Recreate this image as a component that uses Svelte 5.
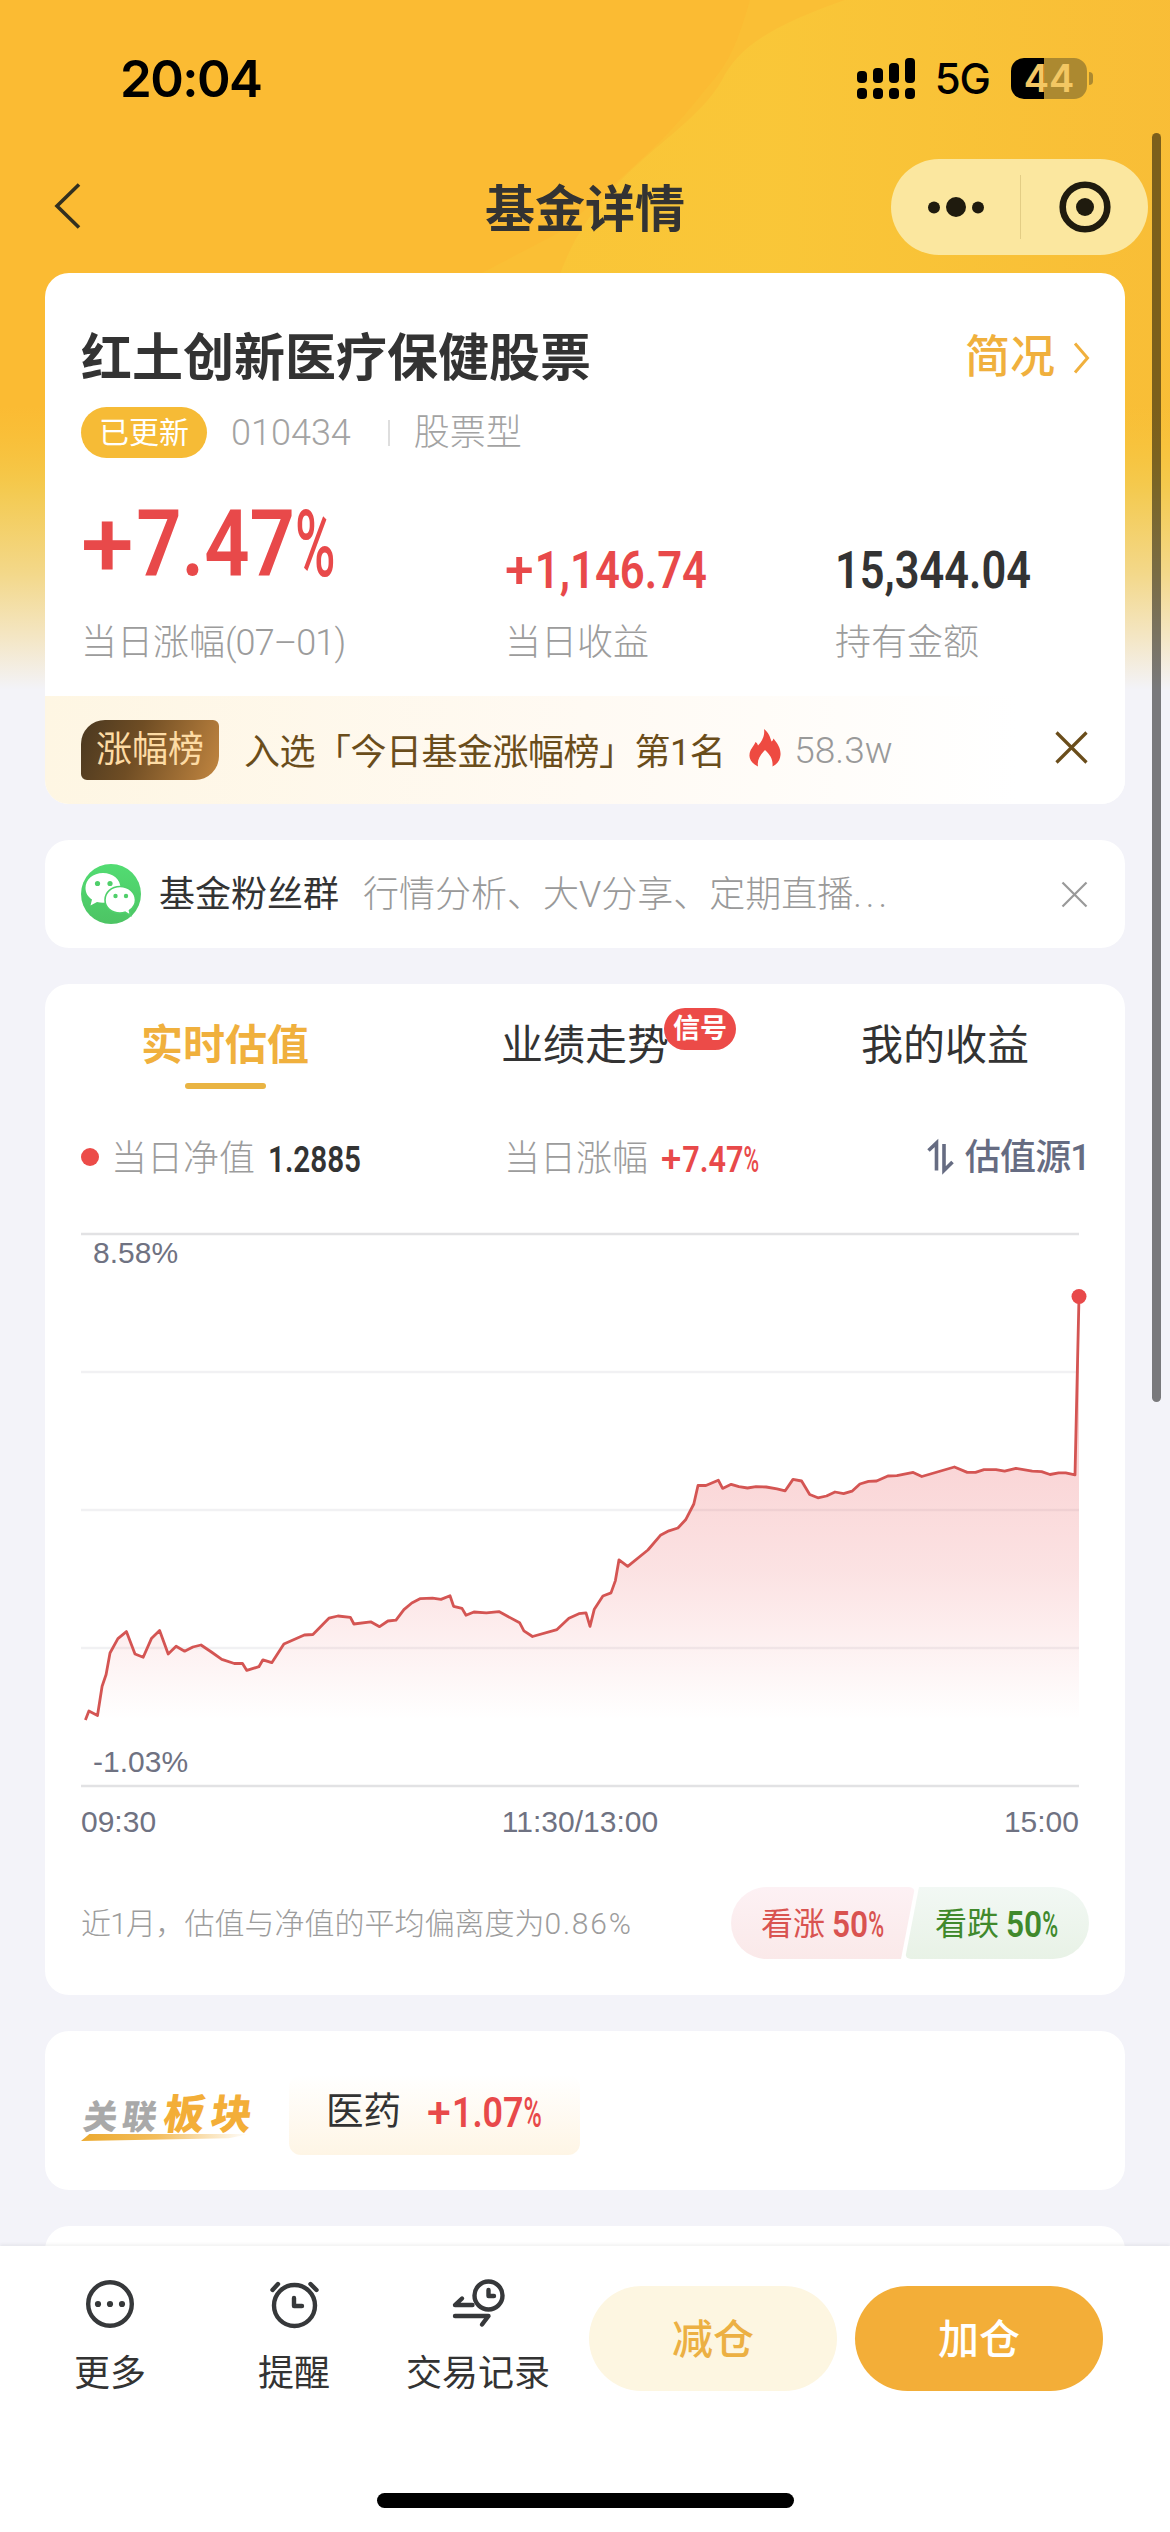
<script lang="ts">
  type Point = [number, number];

  const chart = { width: 998, height: 552, baseline: 486 };
  const gridLines = [0, 138, 276, 414, 552];

  // intraday estimate, in chart pixels
  const points: Point[] = [
    [4.4, 486], [7.9, 477], [16.5, 481.5], [21.1, 452.3], [25.1, 440.5], [29, 419], [36.9, 404.6], [45.4, 397.6],
    [54, 420], [62.2, 423.3], [70.4, 404.6], [78.6, 396.4], [87.2, 420], [95.1, 412.3], [103.6, 417.2], [111.9, 413],
    [120, 411], [130.4, 418], [140.8, 425.4], [153.3, 429.5], [161.5, 429.5], [165.8, 436.4], [177.9, 432.7],
    [181.9, 425.8], [190.8, 428.7], [202.9, 410], [223.3, 401], [231.9, 400.5], [247.9, 384.2], [256.9, 382],
    [269.4, 383.3], [272.9, 390], [289.7, 387.8], [298.6, 392.7], [306.9, 387], [315, 386.2], [322.9, 375.6],
    [330.8, 369], [339.4, 364.6], [351.5, 364.2], [360, 365.4], [369, 361.7], [372.6, 372.3], [381, 374.4],
    [385, 381.3], [392.9, 378], [405.4, 378.9], [417.9, 377.6], [438.6, 388.7], [442.9, 396.8], [451.5, 402.5],
    [476, 395.6], [487.9, 384.2], [497.9, 379.7], [505, 378.9], [509, 392.3], [513.3, 375.2], [521.9, 362],
    [530, 358.9], [534.4, 346.6], [538, 325.8], [546.7, 332.3], [566.9, 316], [579.4, 301.3], [587.9, 296.8],
    [596.9, 294], [604.6, 285.8], [612.8, 270], [617, 251.5], [624.9, 251.5], [637.3, 246.2], [641.6, 254.4],
    [650.2, 250.3], [657.9, 252.7], [666.5, 254], [675, 252.7], [685.2, 253], [696, 254.8], [704.2, 256.8],
    [712, 245.4], [720.6, 247], [728.7, 260.5], [736.9, 263.8], [745.5, 262], [754, 258], [762.6, 259.7],
    [771, 257.2], [778.9, 250], [787.5, 247.4], [795.6, 247], [806.9, 242], [815.9, 241.7], [832.2, 238.4],
    [840.8, 242.5], [873.4, 233], [886.3, 238.4], [894.5, 238.4], [903, 235.6], [915, 235.6], [923.6, 237.2],
    [934.9, 234.4], [951.2, 237.2], [960.6, 237.6], [969, 240.5], [977.7, 238.9], [984.7, 238.9], [994, 240.9],
    [998, 62.5],
  ];

  let activeTab = $state(0);
  const tabs = [
    { label: "实时估值" },
    { label: "业绩走势", badge: "信号" },
    { label: "我的收益" },
  ];

  let last = $derived(points[points.length - 1]);
  let linePath = $derived(buildPath(points));
  let areaPath = $derived(`${linePath} L${chart.width} ${chart.baseline} L${points[0][0]} ${chart.baseline} Z`);

  function buildPath(pts: Point[]) {
    return pts.map(([x, y], i) => `${i === 0 ? "M" : "L"}${x} ${y}`).join(" ");
  }

  const advance: Record<string, number> = { "+": 0.68, "%": 0.53, ".": 0.25, ",": 0.25 };

  function measure(text: string) {
    return [...text].reduce((sum, c) => sum + (advance[c] ?? 0.57), 0);
  }

  // signs and the percent mark are set lighter than the digits
  function splitSigns(text: string, width: number) {
    const unit = width / measure(text);
    let x = 0;
    return text
      .split(/([+%])/)
      .filter(Boolean)
      .map((part) => {
        const w = measure(part) * unit;
        const sign = part === "+" || part === "%";
        const run = { part, x, w: w - (sign ? unit * 0.03 : 0), sign };
        x += w;
        return run;
      });
  }
</script>

<!-- condensed figures: cap height and run width are fixed -->
{#snippet figure(text: string, width: number, cap: number)}
  <svg class="figure" {width} height={cap} viewBox="0 0 {width} {cap}">
    {#each splitSigns(text, width) as run}
      <text class:sign={run.sign} x={run.x} y={cap} font-size={cap / 0.711} textLength={run.w} lengthAdjust="spacingAndGlyphs">{run.part}</text>
    {/each}
  </svg>
{/snippet}

{#snippet cross(size: number, stroke: number)}
  <svg class="cross" width={size} height={size} viewBox="0 0 {size} {size}">
    <path d="M1.5 1.5 L{size - 1.5} {size - 1.5} M{size - 1.5} 1.5 L1.5 {size - 1.5}" stroke-width={stroke} />
  </svg>
{/snippet}

<div class="screen">
  <svg class="backdrop" width="1170" height="700" viewBox="0 0 1170 700">
    <defs>
      <linearGradient id="glow" x1="0" x2="1" y1="0" y2="0">
        <stop offset="0" stop-color="#f9c738" />
        <stop offset="0.35" stop-color="#f9c939" />
        <stop offset="1" stop-color="#f8bd37" />
      </linearGradient>
      <linearGradient id="fade" x1="0" x2="0" y1="0" y2="1">
        <stop offset="0.58" stop-color="#f6c53c" stop-opacity="0" />
        <stop offset="0.7" stop-color="#f4ca50" />
        <stop offset="0.82" stop-color="#f3d88a" />
        <stop offset="0.91" stop-color="#f4e6c4" />
        <stop offset="0.985" stop-color="#f3f3f8" />
      </linearGradient>
    </defs>
    <rect width="1170" height="700" fill="#fbbb33" />
    <path d="M750 0 C738 40 732 60 705 90 C665 140 655 148 560 232 L430 300 L1170 500 L1170 0 Z" fill="#fabf35" />
    <path d="M845 0 C770 26 738 48 722 80 C690 138 595 170 558 280 L558 440 L1170 440 L1170 0 Z" fill="url(#glow)" opacity="0.75" />
    <rect width="1170" height="700" fill="url(#fade)" />
  </svg>

  <header>
    <div class="status">
      <span class="time">20:04</span>
      <div class="indicators">
        <svg width="58" height="42" viewBox="0 0 58 42">
          <rect x="0" y="13" width="10" height="12" rx="4" />
          <rect x="16" y="10" width="10" height="15" rx="4" />
          <rect x="32" y="5" width="10" height="20" rx="4" />
          <rect x="48" y="0" width="10" height="25" rx="4" />
          <rect x="0" y="30" width="10" height="11" rx="4" />
          <rect x="16" y="30" width="10" height="11" rx="4" />
          <rect x="32" y="30" width="10" height="11" rx="4" />
          <rect x="48" y="30" width="10" height="11" rx="4" />
        </svg>
        <span class="network">5G</span>
        <div class="battery">44</div>
        <i class="battery-tip"></i>
      </div>
    </div>

    <div class="nav">
      <svg class="back" width="27" height="46" viewBox="0 0 27 46">
        <path d="M25 1.5 L3 23 L25 44.5" />
      </svg>
      <h1>基金详情</h1>
      <div class="capsule">
        <svg width="56" height="20" viewBox="0 0 56 20">
          <circle cx="6" cy="10.5" r="6" />
          <circle cx="28" cy="10" r="10" />
          <circle cx="50" cy="10.5" r="6" />
        </svg>
        <i></i>
        <svg width="52" height="52" viewBox="0 0 52 52">
          <circle cx="26" cy="26" r="22.3" fill="none" stroke="#1f1b0e" stroke-width="6.6" />
          <circle cx="26" cy="26" r="9" />
        </svg>
      </div>
    </div>
  </header>

  <main>
    <section class="card fund">
      <div class="title-row">
        <h2>红土创新医疗保健股票</h2>
        <a class="more" href="#brief">
          简况
          <svg width="17" height="32" viewBox="0 0 17 32"><path d="M2 1.5 L14.5 16 L2 30.5" /></svg>
        </a>
      </div>
      <div class="meta">
        <span class="updated">已更新</span>
        <span class="code">010434</span>
        <i></i>
        <span>股票型</span>
      </div>
      <div class="stats">
        <div class="stat primary red">
          {@render figure("+7.47%", 257, 66)}
          <span>当日涨幅<small>(07–01)</small></span>
        </div>
        <div class="stat red">
          {@render figure("+1,146.74", 202, 37)}
          <span>当日收益</span>
        </div>
        <div class="stat">
          {@render figure("15,344.04", 196, 37)}
          <span>持有金额</span>
        </div>
      </div>
      <div class="rank">
        <span class="rank-tag">涨幅榜</span>
        <span class="rank-text">入选「今日基金涨幅榜」第1名</span>
        <svg class="flame" width="32" height="38" viewBox="0 0 32 38">
          <path d="M15 0 C20 4 21 8 22.5 12.5 C23.5 12 24 11 24.5 9.5 C29 15 32 20 31.5 26 C31 32 28 35 23.5 37.5 C24 31 22 26.500 16 21 C10.500 26.500 8 31.500 9 37.500 C4 35 0 31 0.5 26 C0.800 20 4.500 18 6.500 13 C8 14 8.500 15 9 16.500 C13.500 12 16 6 15 0 Z" />
        </svg>
        <span class="heat">58.3w</span>
        {@render cross(33, 3.2)}
      </div>
    </section>

    <section class="card group">
      <svg class="wechat" width="60" height="60" viewBox="0 0 60 60">
        <defs>
          <linearGradient id="wx" x1="0" x2="0" y1="0" y2="1">
            <stop offset="0" stop-color="#52dc72" />
            <stop offset="1" stop-color="#4dc464" />
          </linearGradient>
        </defs>
        <circle cx="30" cy="30" r="30" fill="url(#wx)" />
        <path d="M22 9 C12 9 4.500 15.500 4.500 24 C4.500 29 7 33 11 35.500 L9.500 41.500 L16 38 C18 38.600 20 38.800 22 38.800 C32 38.800 39.500 32 39.500 24 C39.500 15.500 32 9 22 9 Z" fill="#fff" />
        <path d="M39 22.500 C30.500 22.500 24 28.500 24 36 C24 43.500 30.500 49 39 49 C41 49 42.500 48.700 44 48.200 L49.500 51.500 L48.500 46.500 C52 44 54.500 40.500 54.500 36 C54.500 28.500 47.500 22.500 39 22.500 Z" fill="#fff" stroke="#4fd06b" stroke-width="1.6" />
        <g fill="#4fcf6a">
          <circle cx="16.500" cy="19.500" r="2.600" />
          <circle cx="29" cy="19.500" r="2.600" />
          <circle cx="34.500" cy="32" r="2.200" />
          <circle cx="45" cy="32" r="2.200" />
        </g>
      </svg>
      <b>基金粉丝群</b>
      <span>行情分析、大V分享、定期直播<small>...</small></span>
      {@render cross(27, 2.2)}
    </section>

    <section class="card estimate">
      <nav class="tabs">
        {#each tabs as tab, i}
          <button class:active={activeTab === i} onclick={() => (activeTab = i)}>
            {tab.label}
            {#if tab.badge}<em>{tab.badge}</em>{/if}
          </button>
        {/each}
      </nav>

      <div class="legend">
        <div class="legend-item">
          <i class="dot"></i>
          <span>当日净值</span>
          {@render figure("1.2885", 93, 26)}
        </div>
        <div class="legend-item red">
          <span>当日涨幅</span>
          {@render figure("+7.47%", 99, 26)}
        </div>
        <div class="source">
          <svg width="27" height="32" viewBox="0 0 27 32">
            <path d="M1.5 9.500 L9.500 2 V29.500 M17 3 V29.500 L25.500 21" />
          </svg>
          <span>估值源1</span>
        </div>
      </div>

      <div class="plot">
        <svg width={chart.width} height={chart.height} viewBox="0 0 {chart.width} {chart.height}">
          <defs>
            <linearGradient id="area" x1="0" x2="0" y1="0" y2="1">
              <stop offset="0" stop-color="#e94b4f" stop-opacity="0.34" />
              <stop offset="0.65" stop-color="#e94b4f" stop-opacity="0.16" />
              <stop offset="1" stop-color="#e94b4f" stop-opacity="0" />
            </linearGradient>
          </defs>
          {#each gridLines as y, i}
            <line x1="0" x2={chart.width} y1={y} y2={y} class:edge={i === 0 || i === gridLines.length - 1} />
          {/each}
          <path d={areaPath} fill="url(#area)" />
          <path class="line" d={linePath} />
          <circle cx={last[0]} cy={last[1]} r="7.5" />
        </svg>
        <span class="high">8.58%</span>
        <span class="low">-1.03%</span>
      </div>
      <div class="axis">
        <span>09:30</span>
        <span>11:30/13:00</span>
        <span>15:00</span>
      </div>

      <div class="note">
        <p><span>近1月，</span>估值与净值的平均偏离度为<small>0.86%</small></p>
        <div class="votes">
          <div class="vote up"><span>看涨</span> {@render figure("50%", 53, 26)}</div>
          <div class="vote down"><span>看跌</span> {@render figure("50%", 53, 26)}</div>
        </div>
      </div>
    </section>

    <section class="card sector">
      <div class="sector-logo">
        <div><span>关联</span><strong>板块</strong></div>
        <i></i>
      </div>
      <div class="chip red">
        <span>医药</span>
        {@render figure("+1.07%", 116, 30)}
      </div>
    </section>

    <section class="card next"></section>
  </main>

  <footer>
    <div class="action">
      <svg width="50" height="50" viewBox="0 0 50 50">
        <circle cx="25" cy="25" r="21.800" />
        <g class="solid">
          <circle cx="13" cy="25" r="3.100" />
          <circle cx="25" cy="25" r="3.100" />
          <circle cx="37" cy="25" r="3.100" />
        </g>
      </svg>
      更多
    </div>
    <div class="action">
      <svg width="50" height="50" viewBox="0 0 50 50">
        <circle cx="25.500" cy="26.500" r="20.500" />
        <path d="M3.500 11 L9 5 M41.500 5 L47.500 11" />
        <path d="M25 19 V27 H33" />
      </svg>
      提醒
    </div>
    <div class="action">
      <svg width="54" height="50" viewBox="0 0 54 50">
        <circle cx="37.500" cy="16.500" r="14" />
        <path d="M37.500 11 V17 H43" />
        <path d="M21.500 26 H4 L11 19.500 M4 37 H37.500 L31 45.500" />
      </svg>
      交易记录
    </div>
    <button class="reduce">减仓</button>
    <button class="add">加仓</button>
    <i class="home"></i>
  </footer>

  <i class="scrollbar"></i>
</div>

<style>
  :global(body) {
    margin: 0;
    background: #f3f3f9;
  }
  .screen {
    position: relative;
    display: flex;
    flex-direction: column;
    width: 1170px;
    height: 2532px;
    overflow: hidden;
    background: #f3f3f9;
    color: #333;
    font-family: Roboto, "Noto Sans CJK SC", sans-serif;
    font-size: 36px;
    line-height: 1;
    white-space: nowrap;
  }
  .screen > * {
    flex-shrink: 0;
  }
  .screen :global(svg) {
    display: block;
    flex-shrink: 0;
    overflow: visible;
  }
  .backdrop {
    position: absolute;
    top: 0;
    left: 0;
  }
  h1, h2, p, button {
    margin: 0;
    padding: 0;
    border: 0;
    background: none;
    font: inherit;
    color: inherit;
  }
  small {
    font-size: inherit;
  }
  .red { color: #e8494a; }
  .figure {
    fill: currentColor;
    font-family: Roboto, sans-serif;
    font-weight: 600;
  }
  .sign {
    font-weight: 500;
  }
  .cross {
    fill: none;
    stroke: currentColor;
    margin-left: auto;
  }

  header {
    position: relative;
    height: 273px;
  }
  .status {
    display: flex;
    align-items: center;
    justify-content: space-between;
    box-sizing: border-box;
    height: 157px;
    padding: 0 77px 0 120px;
    color: #000;
    font-family: Inter, sans-serif;
  }
  .time {
    font-size: 51px;
    font-weight: 600;
    letter-spacing: -1.6px;
  }
  .indicators {
    display: flex;
    align-items: center;
  }
  .network {
    margin-left: 20px;
    font-size: 42px;
    font-weight: 500;
    letter-spacing: -1px;
  }
  .battery {
    width: 76px;
    height: 41px;
    margin-left: 21px;
    border-radius: 13px;
    background: linear-gradient(90deg, #000 33px, #ac8930 33px);
    color: #f3c763;
    font-size: 38px;
    font-weight: 600;
    line-height: 41px;
    text-align: center;
  }
  .battery-tip {
    width: 4px;
    height: 13px;
    margin-left: 2px;
    border-radius: 0 6px 6px 0;
    background: #ac8930;
  }
  .nav {
    display: grid;
    grid-template-columns: 1fr auto 1fr;
    align-items: center;
    height: 100px;
    padding: 0 22px 0 54px;
  }
  .back {
    margin-bottom: 2px;
    fill: none;
    stroke: #33301f;
    stroke-width: 3.6;
  }
  h1 {
    font-size: 50px;
    font-weight: 700;
    margin-left: -32px;
    margin-top: 6px;
  }
  .capsule {
    display: flex;
    align-items: center;
    justify-self: end;
    box-sizing: border-box;
    width: 257px;
    height: 96px;
    padding-left: 37px;
    border-radius: 48px;
    background: #fbe79f;
    fill: #1f1b0e;
  }
  .capsule i {
    width: 1px;
    height: 64px;
    margin: 0 38px 0 36px;
    background: #e3cd85;
  }

  main {
    position: relative;
    display: flex;
    flex-direction: column;
    gap: 36px;
    height: 1973px;
    padding: 0 45px;
    overflow: hidden;
  }
  .card {
    box-sizing: border-box;
    flex-shrink: 0;
    border-radius: 24px;
    background: #fff;
    overflow: hidden;
  }

  .fund {
    height: 531px;
    padding-top: 53px;
  }
  .title-row {
    display: flex;
    align-items: center;
    justify-content: space-between;
    height: 63px;
    padding: 0 35px 0 36px;
  }
  h2 {
    padding-top: 1px;
    font-size: 51px;
    font-weight: 700;
  }
  .more {
    display: flex;
    align-items: center;
    gap: 18px;
    color: #f0b03d;
    font-size: 45px;
    font-weight: 500;
    text-decoration: none;
  }
  .more svg {
    fill: none;
    stroke: currentColor;
    stroke-width: 3;
  }
  .meta {
    display: flex;
    align-items: center;
    height: 51px;
    margin-top: 18px;
    padding: 0 36px;
    color: #a3a3a3;
    font-weight: 300;
  }
  .updated {
    width: 126px;
    height: 51px;
    margin-right: 24px;
    border-radius: 26px;
    background: #f6bb36;
    color: #fff;
    font-size: 30px;
    font-weight: 400;
    line-height: 51px;
    text-align: center;
  }
  .meta i {
    width: 2px;
    height: 26px;
    margin: 0 24px 0 37px;
    background: #dedede;
  }
  .stats {
    display: grid;
    grid-template-columns: 424px 330px 1fr;
    align-items: end;
    margin-top: 52px;
    padding: 0 36px;
  }
  .stat .figure {
    margin-bottom: 37px;
  }
  .stat.primary .figure {
    margin-bottom: 49px;
  }
  .stat span {
    display: block;
    color: #9c9c9c;
    font-weight: 300;
  }
  .stat small {
    letter-spacing: -0.9px;
  }
  .rank {
    display: flex;
    align-items: center;
    height: 108px;
    margin-top: 35px;
    padding: 0 37px 0 36px;
    background: linear-gradient(90deg, #fef6e3, #fffaf3 50%, #fff 90%);
    color: #6a4d1b;
  }
  .rank-tag {
    width: 138px;
    height: 60px;
    border-radius: 24px 6px 24px 6px;
    background: linear-gradient(110deg, #4a3820, #6f4d24 40%, #c28640);
    color: #fddba4;
    line-height: 60px;
    text-align: center;
  }
  .rank-text {
    margin-left: 25px;
    padding-top: 5px;
    letter-spacing: -0.5px;
  }
  .flame {
    margin: 0 13px 4px 24px;
    fill: #ee4a41;
  }
  .heat {
    color: #999;
    font-weight: 300;
    font-size: 37px;
  }
  .rank .cross {
    margin-bottom: 6px;
  }

  .group {
    display: flex;
    align-items: center;
    height: 108px;
    padding: 0 37px 0 36px;
    color: #999;
  }
  .group b {
    margin: 2px 24px 0 18px;
    color: #333;
    font-weight: 400;
  }
  .group span {
    padding-top: 2px;
    font-weight: 300;
  }
  .group small {
    letter-spacing: 4px;
  }

  .estimate {
    height: 1011px;
  }
  .tabs {
    display: grid;
    grid-template-columns: repeat(3, 1fr);
    height: 105px;
  }
  .tabs button {
    position: relative;
    justify-self: center;
    height: 105px;
    font-size: 42px;
    line-height: 123px;
  }
  .tabs .active {
    color: #f0b03d;
    font-weight: 700;
  }
  .tabs .active::after {
    content: "";
    position: absolute;
    left: 50%;
    bottom: 0;
    width: 81px;
    height: 6px;
    margin-left: -40px;
    border-radius: 3px;
    background: #e9b443;
  }
  .tabs em {
    position: absolute;
    top: 24px;
    left: 163px;
    width: 72px;
    border-radius: 21px;
    background: #ec4b48;
    color: #fff;
    font-size: 27px;
    font-style: normal;
    font-weight: 700;
    line-height: 42px;
    text-align: center;
  }
  .legend {
    display: grid;
    grid-template-columns: 423px 1fr auto;
    align-items: center;
    height: 60px;
    margin-top: 38px;
    padding: 0 35px 0 36px;
  }
  .legend-item {
    display: flex;
    align-items: center;
  }
  .legend-item span {
    margin: 3px 13px 0 0;
    color: #9c9c9c;
    font-weight: 300;
  }
  .legend-item .figure {
    margin-top: 4px;
  }
  .dot {
    width: 18px;
    height: 18px;
    margin-right: 12px;
    border-radius: 50%;
    background: #ec4b48;
  }
  .source {
    display: flex;
    align-items: center;
    gap: 11px;
    color: #666c82;
    font-weight: 500;
  }
  .source span {
    padding-top: 2px;
    letter-spacing: -0.8px;
  }
  .source svg {
    fill: none;
    stroke: currentColor;
    stroke-width: 3.6;
  }
  .plot {
    position: relative;
    margin: 47px 0 0 36px;
  }
  .plot line {
    stroke: #f1f1f3;
    stroke-width: 2.4;
  }
  .plot line.edge {
    stroke: #e2e2e4;
  }
  .plot .line {
    fill: none;
    stroke: #d45553;
    stroke-width: 2.8;
    stroke-linejoin: round;
  }
  .plot circle {
    fill: #e8494a;
  }
  .plot span,
  .axis {
    color: #6f7282;
    font-family: "Liberation Sans", sans-serif;
    font-size: 30px;
  }
  .plot span {
    position: absolute;
    left: 12px;
  }
  .high { top: 4px; }
  .low { bottom: 9px; }
  .axis {
    display: flex;
    justify-content: space-between;
    margin: 21px 46px 0 36px;
  }
  .note {
    display: flex;
    align-items: center;
    justify-content: space-between;
    height: 72px;
    margin-top: 50px;
    padding: 0 36px;
    color: #9c9c9c;
    font-size: 30px;
    font-weight: 300;
  }
  .note p {
    padding-top: 2px;
  }
  .note p span {
    letter-spacing: -0.8px;
  }
  .note small {
    letter-spacing: 1.8px;
  }
  .votes {
    display: flex;
  }
  .vote {
    display: flex;
    align-items: center;
    gap: 7px;
    box-sizing: border-box;
    width: 184px;
    height: 72px;
    padding-left: 30px;
    font-size: 32px;
    font-weight: 400;
  }
  .vote span {
    padding-top: 2px;
  }
  .vote .figure {
    margin-top: 2px;
  }
  .up {
    border-radius: 36px 6px 6px 36px;
    background: linear-gradient(#fdf1f4, #fae9e9);
    clip-path: polygon(0 0, 100% 0, 92.4% 100%, 0 100%);
    color: #d95350;
  }
  .down {
    margin-left: -10px;
    border-radius: 6px 36px 36px 6px;
    background: linear-gradient(#f2f8f4, #e8f2e6);
    clip-path: polygon(7.6% 0, 100% 0, 100% 100%, 0 100%);
    color: #40892c;
  }

  .sector {
    display: flex;
    height: 159px;
    padding: 44px 36px 0;
  }
  .sector-logo {
    width: 208px;
    padding-top: 20px;
    box-sizing: border-box;
  }
  .sector-logo div {
    display: flex;
    align-items: baseline;
    gap: 2px;
    height: 38px;
    padding-left: 3px;
    transform: skewX(-8deg);
    font-weight: 900;
  }
  .sector-logo span {
    color: #a9a9a9;
    font-size: 34px;
    letter-spacing: 5px;
  }
  .sector-logo strong {
    color: #f3ae38;
    font-size: 41px;
    font-weight: 900;
    letter-spacing: 6px;
  }
  .sector-logo i {
    display: block;
    width: 168px;
    height: 7px;
    margin-top: 1px;
    background: linear-gradient(90deg, #eba92f, #f3bd5c 45%, #fff);
    clip-path: polygon(5% 0, 100% 0, 88% 60%, 0 100%);
  }
  .chip {
    display: flex;
    align-items: center;
    box-sizing: border-box;
    width: 291px;
    height: 80px;
    padding: 0 0 7px 37px;
    border-radius: 12px;
    background: linear-gradient(#fff, #fef5e5);
  }
  .chip span {
    margin: 1px 26px 0 0;
    color: #333;
    font-size: 37.5px;
  }
  .next {
    height: 60px;
  }

  footer {
    position: relative;
    display: flex;
    align-items: flex-start;
    box-sizing: border-box;
    height: 286px;
    padding: 33px 0 0 18px;
    background: #fff;
    box-shadow: 0 -2px 3px rgba(0, 0, 0, 0.05);
  }
  .action {
    display: flex;
    flex-direction: column;
    align-items: center;
    gap: 27px;
    width: 184px;
  }
  .action svg {
    fill: none;
    stroke: #36383a;
    stroke-width: 4.4;
    stroke-linecap: round;
    stroke-linejoin: round;
  }
  .action .solid {
    fill: #36383a;
    stroke: none;
  }
  footer button {
    width: 248px;
    height: 105px;
    margin: 7px 18px 0 0;
    border-radius: 53px;
    font-size: 41px;
    font-weight: 500;
    line-height: 108px;
  }
  footer .reduce {
    margin-left: 19px;
    background: #fdf6e1;
    color: #ecb043;
  }
  footer .add {
    background: #f3ae38;
    color: #fff;
  }
  .home {
    position: absolute;
    left: 377px;
    bottom: 24px;
    width: 417px;
    height: 15px;
    border-radius: 8px;
    background: #000;
  }
  .scrollbar {
    position: absolute;
    top: 133px;
    right: 9px;
    width: 9px;
    height: 1269px;
    border-radius: 5px;
    background: rgba(0, 0, 0, 0.5);
  }
</style>
